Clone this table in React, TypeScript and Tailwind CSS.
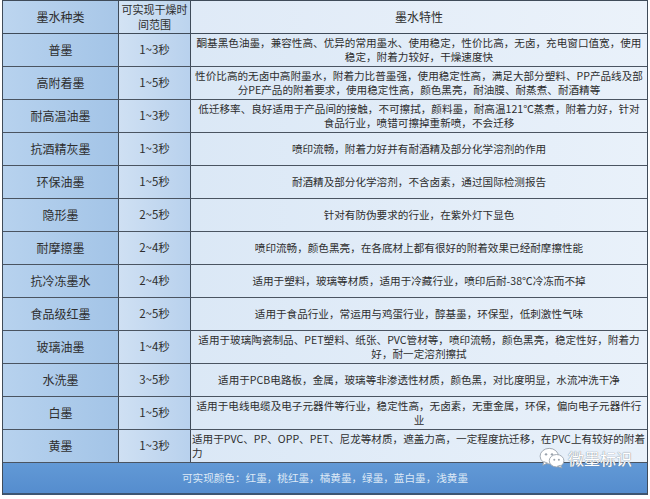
import React from "react";

type Row = { name: string; time: string; lines: string[]; left?: boolean };

const rows: Row[] = [
  { name: "普墨", time: "1~3秒", lines: ["酮基黑色油墨，兼容性高、优异的常用墨水、使用稳定，性价比高，无卤，充电窗口值宽，使用", "稳定，附着力较好，干燥速度快"] },
  { name: "高附着墨", time: "1~5秒", lines: ["性价比高的无卤中高附墨水，附着力比普墨强，使用稳定性高，满足大部分塑料、PP产品线及部", "分PE产品的附着要求，使用稳定性高，颜色黑亮，耐油膜、耐蒸煮、耐酒精等"] },
  { name: "耐高温油墨", time: "1~3秒", lines: ["低迁移率、良好适用于产品间的接触，不可擦拭，颜料墨，耐高温121℃蒸煮，附着力好，针对", "食品行业，喷错可擦掉重新喷，不会迁移"] },
  { name: "抗酒精灰墨", time: "1~3秒", lines: ["喷印流畅，附着力好并有耐酒精及部分化学溶剂的作用"] },
  { name: "环保油墨", time: "1~5秒", lines: ["耐酒精及部分化学溶剂，不含卤素，通过国际检测报告"] },
  { name: "隐形墨", time: "2~5秒", lines: ["针对有防伪要求的行业，在紫外灯下显色"] },
  { name: "耐摩擦墨", time: "2~4秒", lines: ["喷印流畅，颜色黑亮，在各底材上都有很好的附着效果已经耐摩擦性能"] },
  { name: "抗冷冻墨水", time: "2~4秒", lines: ["适用于塑料，玻璃等材质，适用于冷藏行业，喷印后耐-38℃冷冻而不掉"] },
  { name: "食品级红墨", time: "2~5秒", lines: ["适用于食品行业，常运用与鸡蛋行业，醇基墨，环保型，低刺激性气味"] },
  { name: "玻璃油墨", time: "1~4秒", lines: ["适用于玻璃陶瓷制品、PET塑料、纸张、PVC管材等，喷印流畅，颜色黑亮，稳定性好，附着力", "好，耐一定溶剂擦拭"] },
  { name: "水洗墨", time: "3~5秒", lines: ["适用于PCB电路板，金属，玻璃等非渗透性材质，颜色黑，对比度明显，水流冲洗干净"] },
  { name: "白墨", time: "1~5秒", lines: ["适用于电线电缆及电子元器件等行业，稳定性高，无卤素，无重金属，环保，偏向电子元器件行", "业"] },
  { name: "黄墨", time: "1~3秒", lines: ["适用于PVC、PP、OPP、PET、尼龙等材质，遮盖力高，一定程度抗迁移，在PVC上有较好的附着", "力"], left: true },
];

const font = "font-['Noto_Sans_CJK_SC','Noto_Sans',sans-serif]";

const WeChat = () => (
  <svg width="26" height="22" viewBox="0 0 28 24">
    <ellipse cx="11" cy="10" rx="10" ry="8.5" fill="#fff" stroke="#9aa3ad" strokeWidth="1" />
    <path d="M5 16 L4 20 L9 17.5 Z" fill="#fff" stroke="#9aa3ad" strokeWidth="1" />
    <circle cx="7.5" cy="8" r="1.3" fill="#9aa3ad" />
    <circle cx="14" cy="8" r="1.3" fill="#9aa3ad" />
    <ellipse cx="19" cy="15" rx="8" ry="6.8" fill="#fff" stroke="#9aa3ad" strokeWidth="1" />
    <path d="M23 20 L25 23 L20 21 Z" fill="#fff" stroke="#9aa3ad" strokeWidth="1" />
    <circle cx="16.5" cy="14" r="1.1" fill="#9aa3ad" />
    <circle cx="21.5" cy="14" r="1.1" fill="#9aa3ad" />
  </svg>
);

export default function App() {
  return (
    <div className={`relative w-[650px] h-[499px] bg-white ${font} text-[#2e2e2e]`}>
      <div className="ml-[2px] w-[646px] border border-[#3f4b59] border-b-0">
        {/* header */}
        <div className="grid grid-cols-[116px_72px_1fr] h-[33px] border-b border-[#3f4b59]">
          <div className="flex items-center justify-center border-r border-[#3f4b59] bg-gradient-to-r from-[#bcd5ef] to-[#a8c7e8] text-[12px]">墨水种类</div>
          <div className="flex flex-col items-center justify-center border-r border-[#3f4b59] bg-gradient-to-r from-[#d3e3f4] to-[#bcd4ee] text-[11px] leading-[15px]">
            <span>可实现干燥时</span>
            <span>间范围</span>
          </div>
          <div className="flex items-center justify-center bg-gradient-to-r from-[#dfeaf7] to-[#ebf2fa] text-[12px]">墨水特性</div>
        </div>
        {rows.map((r) => (
          <div key={r.name} className="grid grid-cols-[116px_72px_1fr] h-[33px] border-b border-[#4a5461]">
            <div className="flex items-center justify-center border-r border-[#3f4b59] bg-gradient-to-r from-[#b7d2ee] to-[#a3c4e7] text-[12px]">{r.name}</div>
            <div className="flex items-center justify-center border-r border-[#3f4b59] bg-gradient-to-r from-[#cfe0f3] to-[#b8d1ed] text-[11.5px]">{r.time}</div>
            <div
              className={`flex flex-col justify-center ${r.left ? "items-start pl-[1px]" : "items-center"} bg-gradient-to-r from-[#dbe8f6] to-[#e9f1fa] text-[10.6px] leading-[14px] whitespace-nowrap overflow-hidden`}
            >
              {r.lines.map((l, i) => (
                <span key={i}>{l}</span>
              ))}
            </div>
          </div>
        ))}
        {/* footer */}
        <div className="flex h-[32px] items-center justify-center border-b-2 border-[#3d5672] bg-gradient-to-b from-[#6299d6] to-[#558dce] text-[10.6px] text-[#dde9f6]">
          可实现颜色：红墨，桃红墨，橘黄墨，绿墨，蓝白墨，浅黄墨
        </div>
      </div>
      {/* watermark */}
      <div className="absolute left-[539px] top-[447px] flex items-center gap-[3px]">
        <WeChat />
        <span className="text-[16px] leading-none text-white [text-shadow:0_0_1px_#8a939e,0_0_1px_#8a939e]">微墨标识</span>
      </div>
    </div>
  );
}
